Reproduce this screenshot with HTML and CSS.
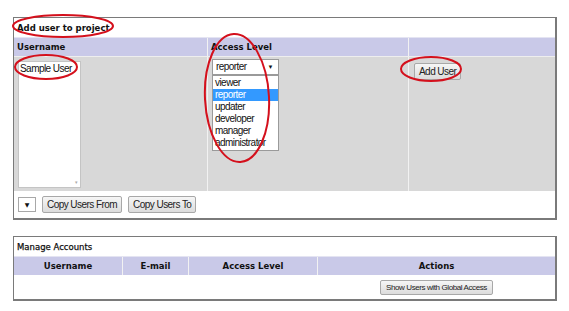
FILE: index.html
```html
<!DOCTYPE html>
<html lang="en">
<head>
    <meta charset="UTF-8">
    <title>Add user to project</title>
    <link rel="stylesheet" href="styles.css">
</head>
<body>
    <div class="panel add-panel">
        <div class="panel-title">Add user to project</div>
        <div class="grid add-grid head">
            <div class="cell">Username</div>
            <div class="cell">Access Level</div>
            <div class="cell"></div>
        </div>
        <div class="grid add-grid body-row">
            <div class="cell">
                <div class="listbox">
                    <div>Sample User</div>
                    <span class="scroll-mark">&#9662;</span>
                </div>
            </div>
            <div class="cell">
                <div class="dropdown">
                    <div class="select-box">
                        <span>reporter</span>
                        <span class="arrow">&#9660;</span>
                    </div>
                    <ul class="options">
                        <li>viewer</li>
                        <li class="picked">reporter</li>
                        <li>updater</li>
                        <li>developer</li>
                        <li>manager</li>
                        <li>administrator</li>
                    </ul>
                </div>
            </div>
            <div class="cell">
                <button class="btn">Add User</button>
            </div>
        </div>
        <div class="copy-row">
            <span class="mini-select">&#9660;</span>
            <button class="btn">Copy Users From</button>
            <button class="btn">Copy Users To</button>
        </div>
    </div>

    <div class="panel manage-panel">
        <div class="panel-title small">Manage Accounts</div>
        <div class="grid manage-grid head centered">
            <div class="cell">Username</div>
            <div class="cell">E-mail</div>
            <div class="cell">Access Level</div>
            <div class="cell">Actions</div>
        </div>
        <div class="grid manage-grid foot">
            <div class="cell"></div>
            <div class="cell"></div>
            <div class="cell"></div>
            <div class="cell centered">
                <button class="btn wide">Show Users with Global Access</button>
            </div>
        </div>
    </div>

    <!-- red marks drawn over the screenshot -->
    <svg class="marks" width="569" height="311" viewBox="0 0 569 311">
        <ellipse cx="63" cy="26" rx="50" ry="11"/>
        <ellipse cx="46" cy="67" rx="31" ry="12"/>
        <ellipse cx="237" cy="98" rx="32" ry="64" transform="rotate(-3 237 98)"/>
        <ellipse cx="431" cy="69" rx="30" ry="12"/>
    </svg>
</body>
</html>
```

FILE: styles.css
```css
body{
    margin: 0;
    width: 569px;
    height: 311px;
    background: white;
    position: relative;
    font-family: "DejaVu Sans", Verdana, sans-serif;
    color: #111;
    overflow: hidden;
}

.panel{
    margin-left: 13px;
    width: 541px;
    border: 1px solid #7a7a7a;
    border-right-width: 2px;
    border-bottom-width: 2px;
}

.add-panel{
    margin-top: 17px;
}

.manage-panel{
    margin-top: 16px;
}

.panel-title{
    height: 19px;
    line-height: 20px;
    padding-left: 3px;
    font-size: 8.5px;
    font-weight: bold;
}

.panel-title.small{
    font-weight: normal;
    font-size: 8.5px;
    -webkit-text-stroke: 0.25px #111;
}

.grid{
    display: grid;
}

.add-grid{
    grid-template-columns: 193px 201px 1fr;
}

.manage-grid{
    grid-template-columns: 108px 66px 129px 1fr;
}

.head{
    background: #c9c9e8;
    height: 18px;
    line-height: 18px;
    font-size: 8.5px;
    font-weight: bold;
    border-top: 1px solid #e4e4f2;
}

.head .cell{
    padding-left: 3px;
}

.head.centered .cell{
    text-align: center;
    padding-left: 0;
}

.grid .cell + .cell{
    border-left: 1px solid #f2f2f2;
}

.body-row{
    background: #d8d8d8;
    height: 134px;
    border-top: 1px solid #eeeeee;
}

.body-row .cell{
    padding: 3px 4px;
}

/* the form controls use a squeezed Arial look */
.listbox,
.select-box,
.options,
.btn{
    font-family: "Liberation Sans", Arial, sans-serif;
    font-size: 10px;
    letter-spacing: -0.55px;
}

.listbox{
    width: 63px;
    height: 127px;
    margin-top: 1px;
    background: white;
    border: 1px solid #c4c4c4;
    box-sizing: border-box;
    padding: 1px 1px;
    white-space: nowrap;
    position: relative;
}

.scroll-mark{
    position: absolute;
    right: 3px;
    bottom: 2px;
    font-size: 5px;
    color: #aaa;
}

.dropdown{
    position: relative;
    margin-top: -1px;
}

.select-box{
    width: 67px;
    height: 16px;
    box-sizing: border-box;
    background: white;
    border: 1px solid #9a9a9a;
    line-height: 14px;
    padding-left: 3px;
    display: flex;
    justify-content: space-between;
}

.arrow{
    font-size: 6px;
    padding-right: 5px;
}

.options{
    position: absolute;
    left: 0;
    top: 16px;
    width: 67px;
    box-sizing: border-box;
    margin: 0;
    padding: 1px 0;
    list-style: none;
    background: white;
    border: 1px solid #9a9a9a;
    line-height: 12px;
}

.options li{
    padding-left: 2px;
    white-space: nowrap;
}

.options .picked{
    background: #3399ff;
    color: white;
}

.btn{
    height: 17px;
    padding: 0 4px;
    background: linear-gradient(#f6f6f6, #dcdcdc);
    border: 1px solid #a8a8a8;
    border-radius: 2px;
    color: #222;
}

.body-row .btn{
    margin-left: 1px;
}

.copy-row{
    height: 27px;
    display: flex;
    align-items: center;
    gap: 6px;
    padding-left: 4px;
}

.mini-select{
    width: 18px;
    height: 15px;
    box-sizing: border-box;
    border: 1px solid #a8a8a8;
    font-size: 6px;
    line-height: 13px;
    text-align: center;
}

.foot{
    height: 24px;
}

.foot .cell{
    border-left-color: transparent !important;
}

.centered{
    text-align: center;
}

.foot .btn{
    margin-top: 5px;
    font-size: 8px;
    letter-spacing: -0.4px;
    height: 15px;
    padding: 0 5px;
}

.marks{
    position: absolute;
    left: 0;
    top: 0;
    pointer-events: none;
}

.marks ellipse{
    fill: none;
    stroke: #d4101c;
    stroke-width: 2;
}
```
